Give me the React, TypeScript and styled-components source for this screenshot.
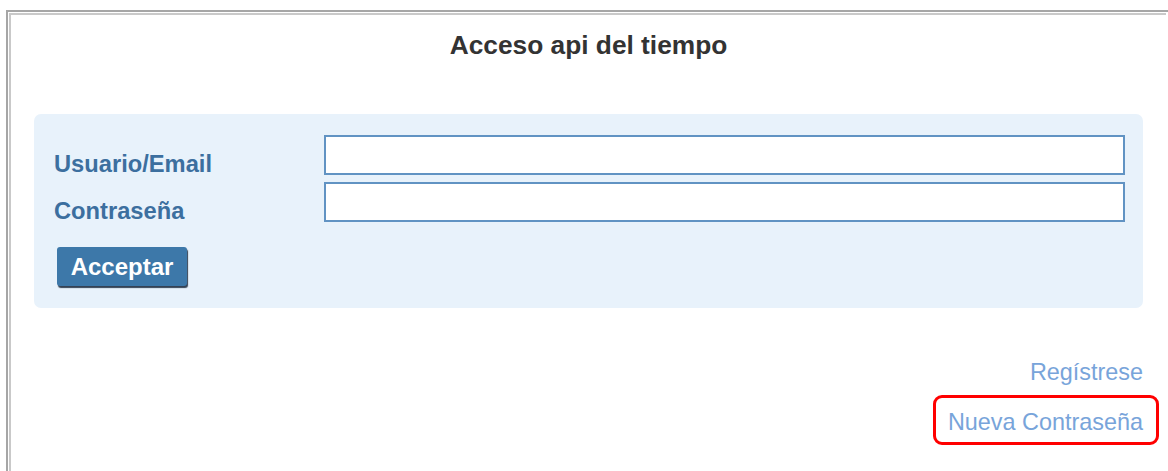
import { FC } from 'react';
import styled, { createGlobalStyle } from 'styled-components';

const GlobalStyle = createGlobalStyle`
  html,
  body {
    margin: 0;
    padding: 0;
    background: #ffffff;
    overflow: hidden;
  }

  body {
    font-family: 'Liberation Sans', Arial, sans-serif;
  }
`;

const StyledFrame = styled.div`
  margin: 10px 0 0 6px;
  padding: 1px 0 0 1px;
  border-top: 2px solid #a6a6a6;
  border-left: 2px solid #a6a6a6;
  width: 1159px;
  height: 458px;
`;

const StyledInner = styled.div`
  box-sizing: border-box;
  border-top: 2px solid #c9c9c9;
  border-left: 2px solid #c9c9c9;
  height: 100%;
  width: 1157px;
  display: flex;
  flex-direction: column;
`;

const StyledTitle = styled.h1`
  margin: 15px 0 0;
  text-align: center;
  font-size: 26.3px;
  line-height: 30px;
  font-weight: 700;
  color: #333333;
`;

const StyledPanel = styled.form`
  margin: 54px 23px 0;
  padding: 21px 18px 22px 20px;
  background: #e8f2fb;
  border-radius: 7px;
  display: flex;
  flex-direction: column;
`;

const StyledFields = styled.div`
  display: grid;
  grid-template-columns: 270px 1fr;
  row-gap: 7px;
`;

const StyledLabel = styled.label`
  align-self: end;
  font-size: 23.7px;
  line-height: 22px;
  font-weight: 700;
  color: #3c6f9f;
`;

const StyledInput = styled.input`
  box-sizing: border-box;
  height: 40px;
  width: 100%;
  margin: 0;
  border: 2px solid #6193c3;
  background: #ffffff;
  outline: none;
`;

const StyledButton = styled.button`
  align-self: flex-start;
  margin: 25px 0 0 3px;
  width: 130px;
  height: 39px;
  padding: 0;
  border: none;
  border-radius: 3px;
  background: #3d78a9;
  box-shadow: 1px 2px 1px rgba(20, 35, 55, 0.85);
  color: #ffffff;
  font-family: 'Liberation Sans', Arial, sans-serif;
  font-size: 24px;
  font-weight: 700;
  line-height: 39px;
`;

const StyledLinks = styled.nav`
  margin: 51px 23px 0 0;
  display: flex;
  flex-direction: column;
  align-items: flex-end;
  gap: 23px;
`;

const StyledLink = styled.a<{ $marked?: boolean }>`
  position: relative;
  font-size: 23.4px;
  line-height: 27px;
  color: #78a4da;
  text-decoration: none;

  &::after {
    content: '';
    display: ${({ $marked }) => ($marked ? 'block' : 'none')};
    position: absolute;
    top: -14px;
    bottom: -9px;
    left: -15px;
    right: -16px;
    border: 3px solid #ff0000;
    border-radius: 9px;
  }
`;

const LoginPanel: FC = () => (
  <StyledPanel onSubmit={(e) => e.preventDefault()}>
    <StyledFields>
      <StyledLabel htmlFor="user">Usuario/Email</StyledLabel>
      <StyledInput id="user" type="text" />
      <StyledLabel htmlFor="pass">Contraseña</StyledLabel>
      <StyledInput id="pass" type="password" />
    </StyledFields>
    <StyledButton type="submit">Acceptar</StyledButton>
  </StyledPanel>
);

const App: FC = () => (
  <>
    <GlobalStyle />
    <StyledFrame>
      <StyledInner>
        <StyledTitle>Acceso api del tiempo</StyledTitle>
        <LoginPanel />
        <StyledLinks>
          <StyledLink href="#">Regístrese</StyledLink>
          <StyledLink href="#" $marked>
            Nueva Contraseña
          </StyledLink>
        </StyledLinks>
      </StyledInner>
    </StyledFrame>
  </>
);

export default App;
